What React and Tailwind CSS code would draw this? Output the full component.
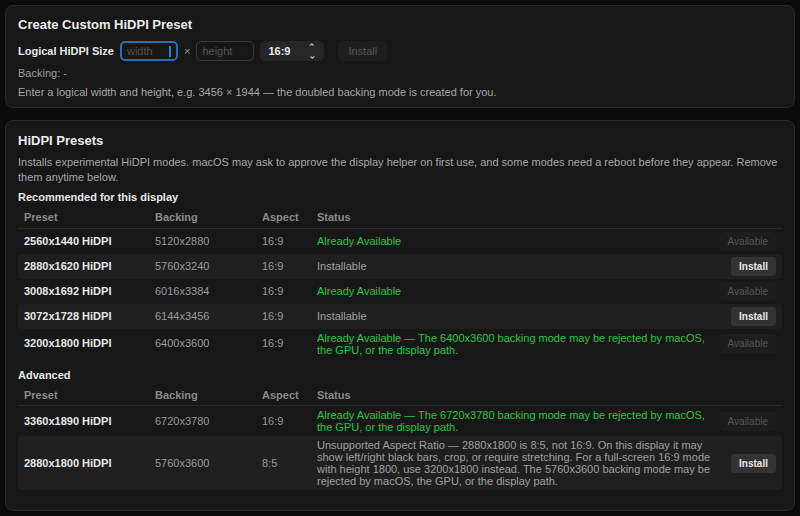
import React from "react";

const rec = [
  ["2560x1440 HiDPI", "5120x2880", "16:9", "Already Available", true],
  ["2880x1620 HiDPI", "5760x3240", "16:9", "Installable", false],
  ["3008x1692 HiDPI", "6016x3384", "16:9", "Already Available", true],
  ["3072x1728 HiDPI", "6144x3456", "16:9", "Installable", false],
  ["3200x1800 HiDPI", "6400x3600", "16:9", "Already Available — The 6400x3600 backing mode may be rejected by macOS, the GPU, or the display path.", true],
];
const adv = [
  ["3360x1890 HiDPI", "6720x3780", "16:9", "Already Available — The 6720x3780 backing mode may be rejected by macOS, the GPU, or the display path.", true],
  ["2880x1800 HiDPI", "5760x3600", "8:5", "Unsupported Aspect Ratio — 2880x1800 is 8:5, not 16:9. On this display it may show left/right black bars, crop, or require stretching. For a full-screen 16:9 mode with height 1800, use 3200x1800 instead. The 5760x3600 backing mode may be rejected by macOS, the GPU, or the display path.", false],
];

const Table = ({ rows }) => (
  <div className="text-[11px]">
    <div className="flex items-center h-[21px] px-[6px] text-[#8a8a8a] font-semibold border-b border-[#2a2a2a]">
      <div className="w-[131px]">Preset</div>
      <div className="w-[107px]">Backing</div>
      <div className="w-[55px]">Aspect</div>
      <div className="flex-1">Status</div>
    </div>
    {rows.map((r, i) => (
      <div key={i} className={`flex items-center min-h-[25px] py-[3px] px-[6px] rounded ${i % 2 ? "bg-[#1f1f1f]" : ""}`}>
        <div className="w-[131px] text-[#e8e8e8] font-semibold">{r[0]}</div>
        <div className="w-[107px] text-[#9a9a9a]">{r[1]}</div>
        <div className="w-[55px] text-[#9a9a9a]">{r[2]}</div>
        <div className={`w-[400px] leading-[12px] ${r[4] ? "text-[#2ec445]" : "text-[#a0a0a0]"}`}>{r[3]}</div>
        <div className="flex-1 flex justify-end">
          {r[4] ? (
            <span className="px-2 py-[2px] rounded bg-[#1d1d1d] text-[#555] text-[10px]">Available</span>
          ) : (
            <span className="px-2 py-[2px] rounded bg-[#333] text-[#e8e8e8] text-[10px] font-semibold">Install</span>
          )}
        </div>
      </div>
    ))}
  </div>
);

export default function App() {
  return (
    <div className="w-[800px] h-[516px] overflow-hidden bg-[#0b0b0b] p-[5px] flex flex-col gap-[12px] text-[#d0d0d0]" style={{ fontFamily: "'Liberation Sans', Arial, sans-serif" }}>
      <div className="rounded-lg border border-[#2a2a2a] bg-[#171717] px-[12px] pt-[11px] pb-[8px]">
        <div className="text-[13px] font-bold text-[#ececec] leading-[16px]">Create Custom HiDPI Preset</div>
        <div className="flex items-center gap-[6px] mt-[8px] text-[11px]">
          <span className="font-semibold text-[#e8e8e8]">Logical HiDPI Size</span>
          <div className="w-[58px] h-[20px] rounded-[5px] border-2 border-[#2f6db0] px-[5px] flex items-center text-[#555]">width<span className="ml-auto w-[2px] h-[11px] bg-[#2f7de0]"></span></div>
          <span className="text-[#999]">×</span>
          <div className="w-[58px] h-[20px] rounded-[5px] border border-[#3a3a3a] px-[5px] flex items-center text-[#555]">height</div>
          <div className="w-[64px] h-[20px] rounded-[5px] bg-[#262626] px-[8px] flex items-center justify-between font-semibold text-[#e8e8e8]">16:9<span className="text-[9px] text-[#bbb] leading-[8px] flex flex-col"><span>⌃</span><span className="rotate-180">⌃</span></span></div>
          <div className="h-[20px] px-[10px] ml-[8px] rounded-[5px] bg-[#1e1e1e] flex items-center text-[#555]">Install</div>
        </div>
        <div className="text-[11px] text-[#9a9a9a] mt-[5px] leading-[14px]">Backing: -</div>
        <div className="text-[11px] text-[#a8a8a8] mt-[5px] leading-[14px]">Enter a logical width and height, e.g. 3456 × 1944 — the doubled backing mode is created for you.</div>
      </div>
      <div className="rounded-lg border border-[#2a2a2a] bg-[#171717] px-[12px] pt-[12px] flex-1">
        <div className="text-[13px] font-bold text-[#ececec] leading-[16px]">HiDPI Presets</div>
        <div className="text-[11px] text-[#a8a8a8] mt-[6px] leading-[15px]">Installs experimental HiDPI modes. macOS may ask to approve the display helper on first use, and some modes need a reboot before they appear. Remove them anytime below.</div>
        <div className="text-[11px] font-bold text-[#e8e8e8] mt-[4px] mb-[2px]">Recommended for this display</div>
        <Table rows={rec} />
        <div className="text-[11px] font-bold text-[#e8e8e8] mt-[8px] mb-[2px]">Advanced</div>
        <Table rows={adv} />
      </div>
    </div>
  );
}
